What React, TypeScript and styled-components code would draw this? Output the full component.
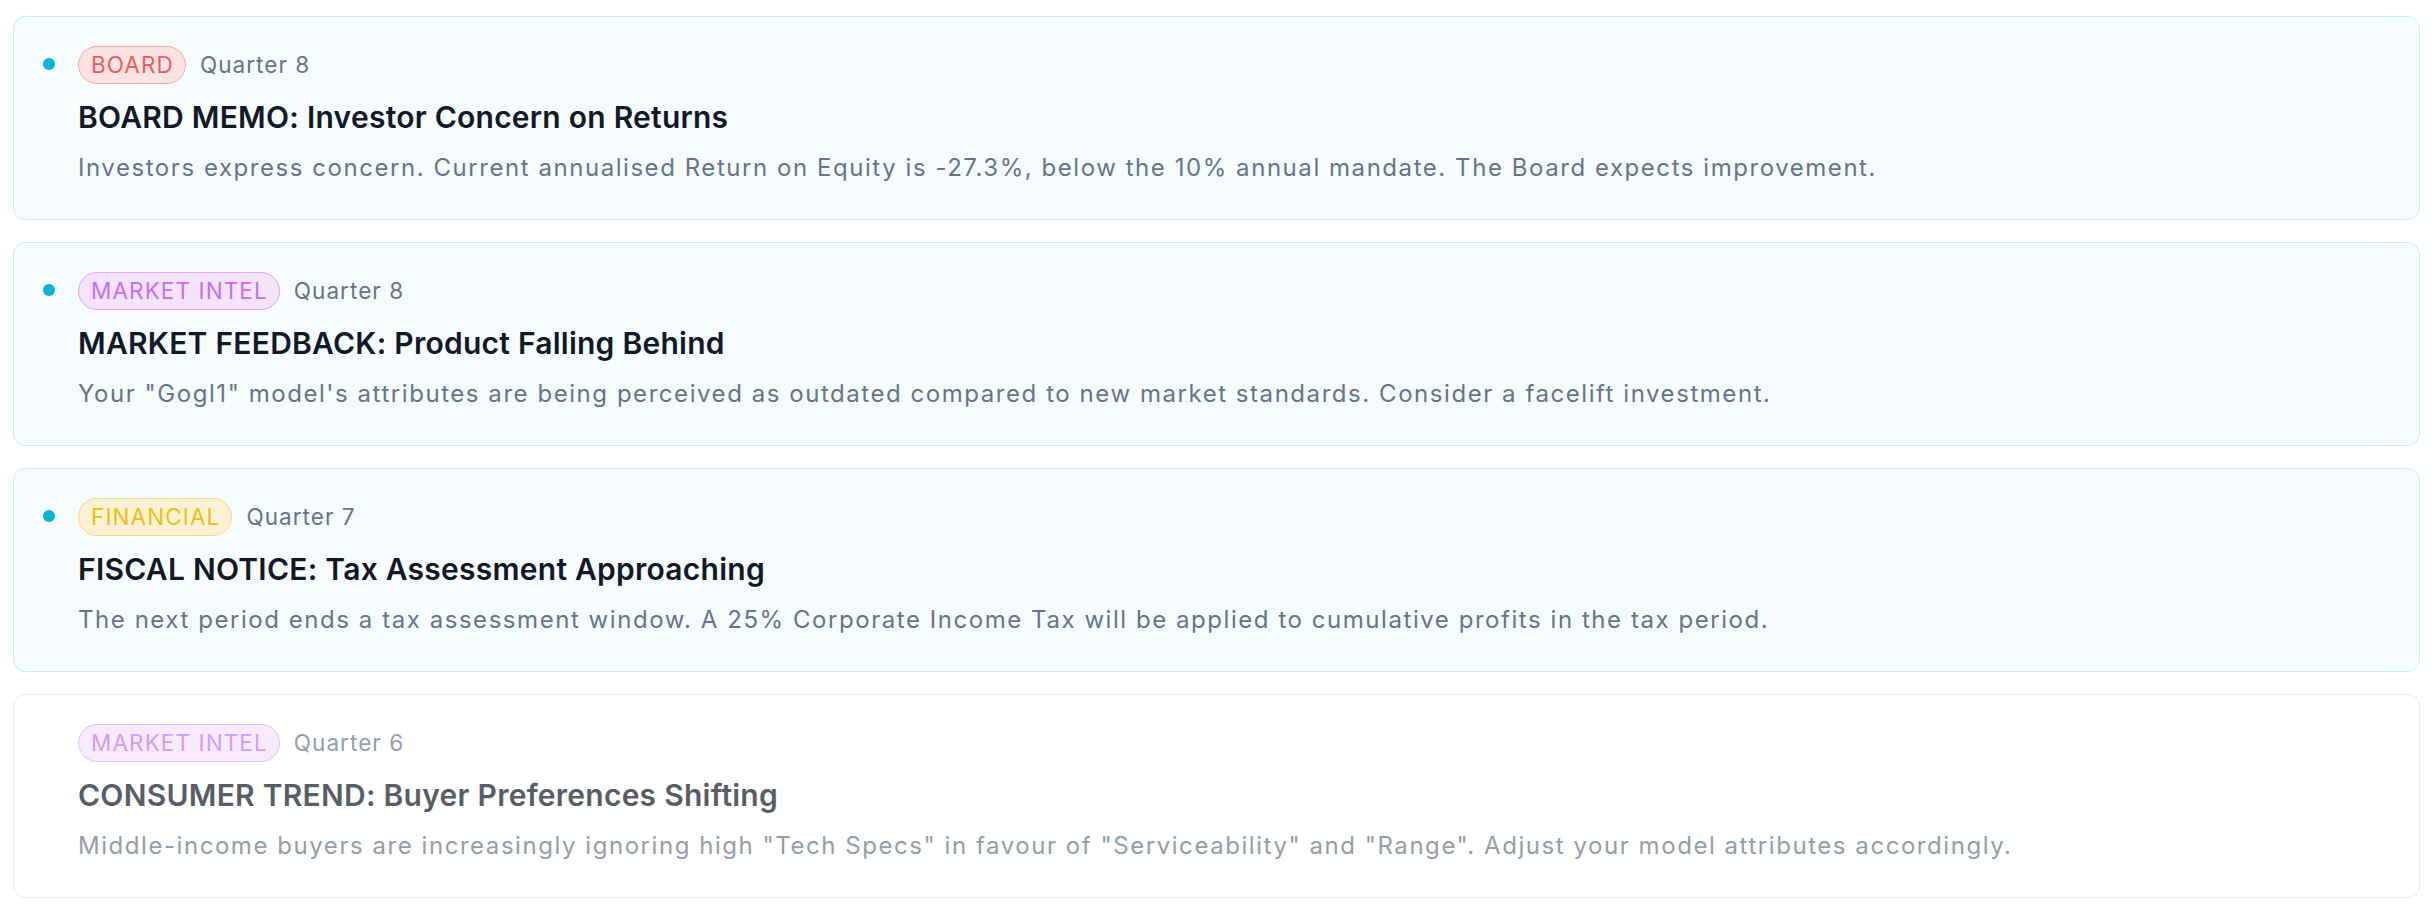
import styled, { createGlobalStyle } from 'styled-components';

type Tone = 'board' | 'market' | 'financial';

interface Message {
  id: number;
  tone: Tone;
  label: string;
  quarter: number;
  title: string;
  body: string;
  unread: boolean;
}

const tones: Record<Tone, { bg: string; border: string; text: string }> = {
  board: { bg: '#fde2e3', border: '#f9a9ab', text: '#f25b5e' },
  market: { bg: '#f3e3fd', border: '#d9a5f8', text: '#c56ef3' },
  financial: { bg: '#fbf1d3', border: '#f6da87', text: '#eebf12' },
};

const messages: Message[] = [
  {
    id: 1,
    tone: 'board',
    label: 'BOARD',
    quarter: 8,
    title: 'BOARD MEMO: Investor Concern on Returns',
    body: 'Investors express concern. Current annualised Return on Equity is -27.3%, below the 10% annual mandate. The Board expects improvement.',
    unread: true,
  },
  {
    id: 2,
    tone: 'market',
    label: 'MARKET INTEL',
    quarter: 8,
    title: 'MARKET FEEDBACK: Product Falling Behind',
    body: 'Your "Gogl1" model\'s attributes are being perceived as outdated compared to new market standards. Consider a facelift investment.',
    unread: true,
  },
  {
    id: 3,
    tone: 'financial',
    label: 'FINANCIAL',
    quarter: 7,
    title: 'FISCAL NOTICE: Tax Assessment Approaching',
    body: 'The next period ends a tax assessment window. A 25% Corporate Income Tax will be applied to cumulative profits in the tax period.',
    unread: true,
  },
  {
    id: 4,
    tone: 'market',
    label: 'MARKET INTEL',
    quarter: 6,
    title: 'CONSUMER TREND: Buyer Preferences Shifting',
    body: 'Middle-income buyers are increasingly ignoring high "Tech Specs" in favour of "Serviceability" and "Range". Adjust your model attributes accordingly.',
    unread: false,
  },
];

const GlobalStyle = createGlobalStyle`
  body {
    margin: 0;
    background: #ffffff;
    font-family: Inter, "Noto Sans", sans-serif;
  }
`;

const List = styled.div`
  display: flex;
  flex-direction: column;
  gap: 22px;
  padding: 16px 12px 0 13px;
`;

const Card = styled.div<{ $unread: boolean }>`
  display: flex;
  gap: 23px;
  height: 204px;
  box-sizing: border-box;
  padding: 29px 29px;
  border-radius: 12px;
  border: 1.5px solid ${(p) => (p.$unread ? '#c6eef4' : '#e3e5e8')};
  background: ${(p) => (p.$unread ? '#f6fcfd' : '#ffffff')};
  opacity: ${(p) => (p.$unread ? 1 : 0.7)};
`;

const Dot = styled.span<{ $visible: boolean }>`
  flex: none;
  width: 12px;
  height: 12px;
  margin-top: 12px;
  border-radius: 50%;
  background: ${(p) => (p.$visible ? '#06b6d4' : 'transparent')};
`;

const Content = styled.div`
  display: flex;
  flex-direction: column;
  min-width: 0;
`;

const Meta = styled.div`
  display: flex;
  align-items: center;
  gap: 14px;
  margin-bottom: 12px;
`;

const Badge = styled.span<{ $tone: Tone }>`
  display: inline-block;
  padding: 3px 11px 3px 12px;
  border-radius: 999px;
  font-size: 22.5px;
  line-height: 30px;
  letter-spacing: 1.1px;
  background: ${(p) => tones[p.$tone].bg};
  border: 1.5px solid ${(p) => tones[p.$tone].border};
  color: ${(p) => tones[p.$tone].text};
`;

const Quarter = styled.span`
  font-size: 22.5px;
  line-height: 30px;
  letter-spacing: 1.05px;
  color: #64748b;
`;

const Title = styled.h3`
  margin: 0 0 12px;
  font-size: 30px;
  line-height: 42px;
  font-weight: 600;
  letter-spacing: 0.25px;
  color: #111827;
`;

const Body = styled.p`
  margin: 0;
  font-size: 24px;
  line-height: 36px;
  letter-spacing: 1.55px;
  color: #64748b;
`;

const App = (): JSX.Element => (
  <>
    <GlobalStyle />
    <List>
      {messages.map((m) => (
        <Card key={m.id} $unread={m.unread}>
          <Dot $visible={m.unread} />
          <Content>
            <Meta>
              <Badge $tone={m.tone}>{m.label}</Badge>
              <Quarter>Quarter {m.quarter}</Quarter>
            </Meta>
            <Title>{m.title}</Title>
            <Body>{m.body}</Body>
          </Content>
        </Card>
      ))}
    </List>
  </>
);

export default App;
